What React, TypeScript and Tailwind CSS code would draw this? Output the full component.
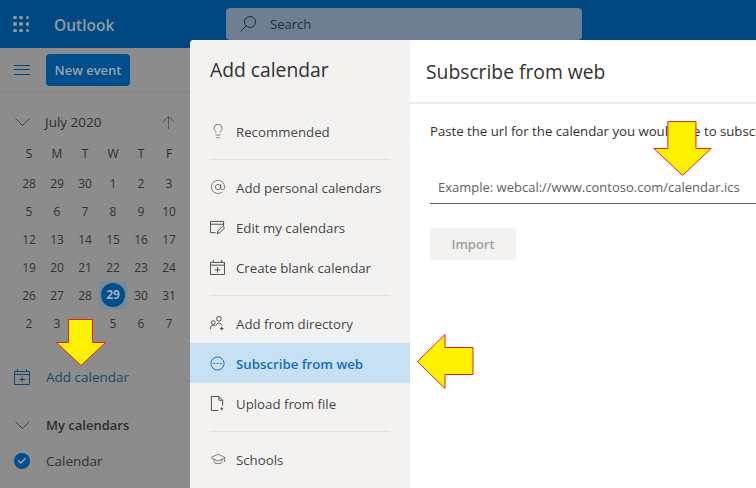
import React from "react";
import { Lightbulb, AtSign, GraduationCap, Check } from "lucide-react";

const font = "font-['Open_Sans','Noto_Sans',sans-serif]";

const weeks = [
  [28, 29, 30, 1, 2, 3, 4],
  [5, 6, 7, 8, 9, 10, 11],
  [12, 13, 14, 15, 16, 17, 18],
  [19, 20, 21, 22, 23, 24, 25],
  [26, 27, 28, 29, 30, 31, 1],
  [2, 3, 4, 5, 6, 7, 8],
];

function Waffle() {
  return (
    <div className="grid w-[16px] grid-cols-3 gap-[3px]">
      {Array.from({ length: 9 }).map((_, i) => (
        <div key={i} className="size-[3.500px] rounded-full bg-[#8f9aa5]" />
      ))}
    </div>
  );
}

function SearchGlass({ className }: { className?: string }) {
  return (
    <svg viewBox="0 0 16 16" fill="none" stroke="currentColor" strokeWidth="1" className={className}>
      <circle cx="10" cy="6" r="5.500" />
      <path d="M6 10 .5 15.500" />
    </svg>
  );
}

function Chevron({ className }: { className?: string }) {
  return (
    <svg viewBox="0 0 15 8" fill="none" stroke="currentColor" strokeWidth="1" className={className}>
      <path d="M.5 .5l7 7 7-7" />
    </svg>
  );
}

function UpArrow({ className }: { className?: string }) {
  return (
    <svg viewBox="0 0 13 13" fill="none" stroke="currentColor" strokeWidth="1" className={className}>
      <path d="M6.500 13V1M.5 6.500l6-6 6 6" />
    </svg>
  );
}

function CalendarPlus({ className }: { className?: string }) {
  return (
    <svg viewBox="0 0 16 16" fill="none" stroke="currentColor" strokeWidth="1" className={className}>
      <path d="M.5 2.500h15v13H.5zM.5 5.500h15M3.500 0v2.500M12.500 0v2.500M8 7.500v6M5 10.500h6" />
    </svg>
  );
}

function EditCalendar({ className }: { className?: string }) {
  return (
    <svg viewBox="0 0 16 16" fill="none" stroke="currentColor" strokeWidth="1" className={className}>
      <path d="M6 13.500H.5V1.500h14v5M.5 4.500h14M7.500 14.500l1-3 5-5 2 2-5 5z" />
    </svg>
  );
}

function Directory({ className }: { className?: string }) {
  return (
    <svg viewBox="0 0 16 16" fill="none" stroke="currentColor" strokeWidth="1" className={className}>
      <circle cx="9.500" cy="3" r="2.500" />
      <circle cx="3.500" cy="7" r="2" />
      <path d="M.5 14v-1.500c0-1.500 1.200-2.500 3-2.500 1 0 1.700.3 2.300.8M6.500 10c.5-1.500 1.500-2.300 3-2.300s2.700.8 3.200 2.300M12.500 11.500v4M10.500 13.500h4" />
    </svg>
  );
}

function WebCircle({ className }: { className?: string }) {
  return (
    <svg viewBox="0 0 16 16" fill="none" stroke="currentColor" strokeWidth="1" className={className}>
      <circle cx="8" cy="8" r="7" />
      <path d="M3.500 8h2M7 8h2M10.500 8h2" />
    </svg>
  );
}

function FileUp({ className }: { className?: string }) {
  return (
    <svg viewBox="0 0 16 16" fill="none" stroke="currentColor" strokeWidth="1" className={className}>
      <path d="M9 15.500H1.500V.5h8l4 4v6M9.500 .5v4h4M12.500 15.500v-3M11 14l1.500-1.500L14 14" />
    </svg>
  );
}

function YellowArrow({ dir, className }: { dir: "down" | "left"; className?: string }) {
  if (dir === "left") {
    return (
      <svg viewBox="0 0 57 55" className={className}>
        <path d="M.5 27.500 28 .5v13h28v27H28v14z" fill="#fff200" stroke="#ed1c24" strokeWidth="1" />
      </svg>
    );
  }
  return (
    <svg viewBox="0 0 50 47" className={className}>
      <path d="M12.500 .5h24v23h13l-24.500 23L.5 23.500h12z" fill="#fff200" stroke="#ed1c24" strokeWidth="1" vectorEffect="non-scaling-stroke" />
    </svg>
  );
}

function NavItem({ icon, label, active }: { icon: React.ReactNode; label: string; active?: boolean }) {
  return (
    <div className={`flex h-10 items-center gap-[10px] pl-5 text-[13.250px] ${active ? "bg-[#c7e0f4] font-semibold text-[#106ebe]" : "text-[#484644]"}`}>
      <span className="flex w-4 justify-start">{icon}</span>
      <span className="pt-1">{label}</span>
    </div>
  );
}

function Divider() {
  return <div className="mx-5 mb-[7px] mt-2 h-px bg-[#e1dfdd]" />;
}

export default function App() {
  return (
    <div className={`relative h-[488px] w-[756px] overflow-hidden bg-[#8c8c8c] ${font}`}>
      <header className="flex h-12 bg-[#004881]">
        <div className="flex w-[226px] shrink-0 items-center">
          <div className="ml-[13px]"><Waffle /></div>
          <span className="ml-[25px] pt-[3px] text-[15.500px] font-semibold text-[#8f9aa5]">Outlook</span>
        </div>
        <div className="mt-2 flex h-[32px] w-[356px] items-center gap-[14px] rounded-sm bg-[#6d7f90] pl-[14px] text-[13px] text-[#17324d]">
          <SearchGlass className="size-4" />
          <span className="pt-[2px]">Search</span>
        </div>
      </header>

      <aside className="w-[190px]">
        <div className="flex h-[44px] items-center border-b border-[#858585]">
          <div className="ml-[14px] flex w-4 flex-col gap-[3.500px]">
            <div className="h-px bg-[#00457c]" />
            <div className="h-px bg-[#00457c]" />
            <div className="h-px bg-[#00457c]" />
          </div>
          <div className="ml-4 flex h-8 w-[84px] items-center justify-center rounded-sm bg-[#004e8c] pt-[2px] text-[13px] font-semibold text-[#99a5b0]">
            New event
          </div>
        </div>

        <div className="mt-[10px] flex h-[40px] items-center pl-[15px] text-[#2e2e2e]">
          <Chevron className="h-[8px] w-[15px] text-[#444]" />
          <span className="ml-[15px] text-[13.500px] font-medium">July 2020</span>
          <UpArrow className="ml-[61px] size-[13px] text-[#555]" />
        </div>

        <div className="ml-[15px] mt-[2px] grid w-[196px] grid-cols-7 text-center text-[12px] text-[#333]">
          {["S", "M", "T", "W", "T", "F", "S"].map((d, i) => (
            <div key={i} className="flex h-[20px] items-center justify-center text-[#2e2e2e]">{d}</div>
          ))}
        </div>
        <div className="ml-[15px] mt-[5px] grid w-[196px] grid-cols-7 text-[12px] text-[#333]">
          {weeks.flat().map((n, i) =>
            i === 31 ? (
              <div key={i} className="flex h-[28px] items-center justify-center bg-[#75899b]">
                <div className="flex size-[24px] items-center justify-center rounded-full bg-[#004e8c] font-bold text-[#a5b0ba]">{n}</div>
              </div>
            ) : (
              <div key={i} className="flex h-[28px] items-center justify-center pt-[2px]">{n}</div>
            ),
          )}
        </div>

        <div className="mt-5 flex h-[40px] items-center pl-[14px] text-[13.500px] text-[#17456e]">
          <CalendarPlus className="size-4" />
          <span className="ml-4">Add calendar</span>
        </div>
        <div className="mt-2 flex h-[40px] items-center pl-[15px] text-[13px] font-semibold text-[#2e2e2e]">
          <Chevron className="h-[8px] w-[15px] text-[#444]" />
          <span className="ml-4 pt-[2px]">My calendars</span>
        </div>
        <div className="flex h-[32px] items-center pl-[14px] text-[13.500px] text-[#333]">
          <div className="flex size-4 items-center justify-center rounded-full bg-[#004e8c]">
            <Check size={10} strokeWidth={3} className="text-[#a5b0ba]" />
          </div>
          <span className="ml-4">Calendar</span>
        </div>
      </aside>

      {/* dialog */}
      <div className="absolute left-[190px] top-[40px] flex h-[448px] w-[566px] overflow-hidden rounded-tl-sm bg-white">
        <div className="w-[220px] shrink-0 bg-[#f3f2f1]">
          <div className="mb-[11px] flex h-[60px] items-center pl-5 text-[19.300px] font-medium text-[#323130]">Add calendar</div>
          <NavItem icon={<Lightbulb size={16} strokeWidth={1} />} label="Recommended" />
          <Divider />
          <NavItem icon={<AtSign size={16} strokeWidth={1} />} label="Add personal calendars" />
          <NavItem icon={<EditCalendar className="size-[15px]" />} label="Edit my calendars" />
          <NavItem icon={<CalendarPlus className="size-[15px]" />} label="Create blank calendar" />
          <Divider />
          <NavItem icon={<Directory className="size-[15px]" />} label="Add from directory" />
          <NavItem active icon={<WebCircle className="size-[15px]" />} label="Subscribe from web" />
          <NavItem icon={<FileUp className="size-[15px]" />} label="Upload from file" />
          <Divider />
          <NavItem icon={<GraduationCap size={16} strokeWidth={1} />} label="Schools" />
        </div>

        <div className="min-w-0 flex-1">
          <div className="flex h-[64px] items-center border-b-2 border-[#edebe9] pl-4 pt-[3px] text-[19.300px] font-medium text-[#323130]">
            Subscribe from web
          </div>
          <div className="pl-5">
            <p className="mt-[17px] h-5 whitespace-nowrap text-[13.200px] leading-5 text-[#323130]">
              Paste the url for the calendar you would like to subscribe to
            </p>
            <div className="mt-[31px] flex h-[32px] items-center border-b border-[#605e5c] pl-2 text-[13px] text-[#605e5c]">
              Example: webcal://www.contoso.com/calendar.ics
            </div>
            <div className="mt-6 flex h-8 w-[86px] items-center justify-center rounded-sm bg-[#f3f2f1] pt-[2px] text-[13px] font-semibold text-[#a19f9d]">
              Import
            </div>
          </div>
        </div>
      </div>

      {/* arrows drawn on top of the screenshot */}
      <YellowArrow dir="down" className="absolute left-[56px] top-[319px] h-[47px] w-[50px]" />
      <YellowArrow dir="down" className="absolute left-[653px] top-[121px] h-[55px] w-[59px]" />
      <YellowArrow dir="left" className="absolute left-[417px] top-[334px] h-[55px] w-[57px]" />
    </div>
  );
}
